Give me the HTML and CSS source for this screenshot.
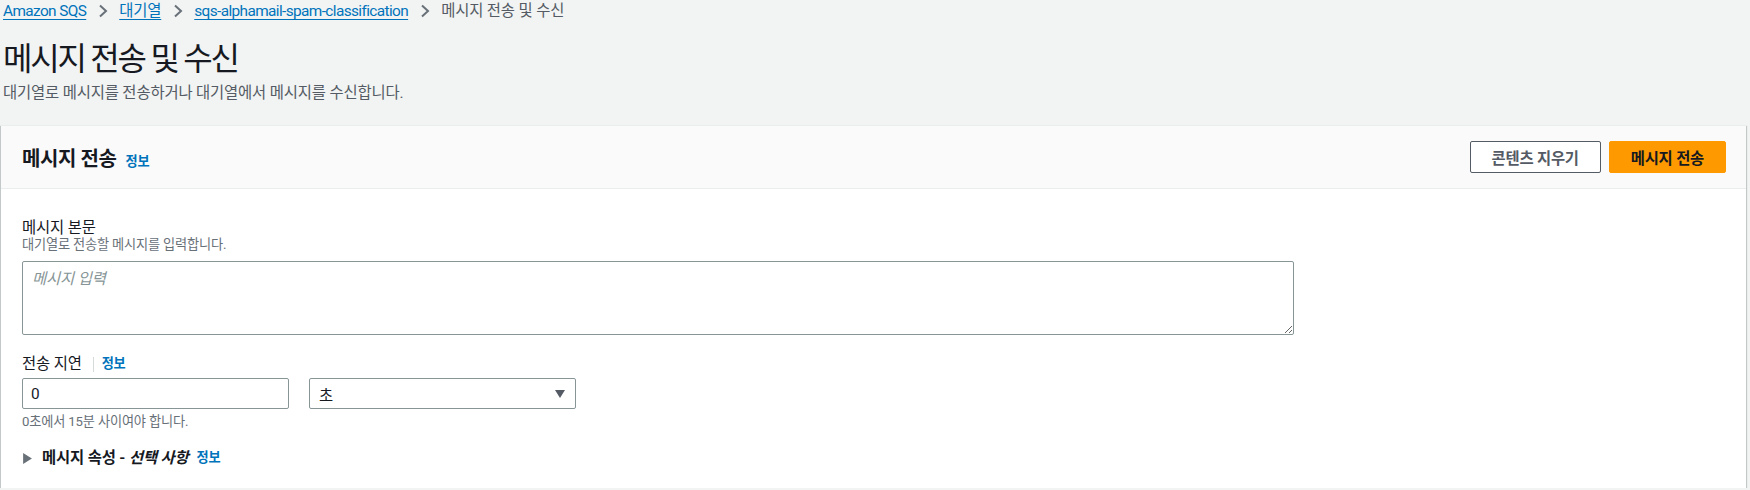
FILE: index.html
```html
<!DOCTYPE html>
<html lang="ko">
<head>
<meta charset="utf-8">
<title>메시지 전송 및 수신</title>
<link rel="stylesheet" href="styles.css">
</head>
<body>
<nav class="crumbs">
  <a class="en" href="#">Amazon SQS</a>
  <svg class="chev" viewBox="0 0 10 14" width="10" height="14"><path d="M2 1.5 L8 7 L2 12.5" /></svg>
  <a href="#">대기열</a>
  <svg class="chev" viewBox="0 0 10 14" width="10" height="14"><path d="M2 1.5 L8 7 L2 12.5" /></svg>
  <a class="en" href="#">sqs-alphamail-spam-classification</a>
  <svg class="chev" viewBox="0 0 10 14" width="10" height="14"><path d="M2 1.5 L8 7 L2 12.5" /></svg>
  <span class="cur">메시지 전송 및 수신</span>
</nav>
<header class="page-head">
  <h1>메시지 전송 및 수신</h1>
  <p class="sub">대기열로 메시지를 전송하거나 대기열에서 메시지를 수신합니다.</p>
</header>
<section class="card">
  <div class="card-head">
    <h2>메시지 전송<a class="info" href="#">정보</a></h2>
    <div class="actions">
      <button class="btn">콘텐츠 지우기</button>
      <button class="btn primary">메시지 전송</button>
    </div>
  </div>
  <div class="card-body">
    <div class="field">
      <label class="label">메시지 본문</label>
      <div class="desc">대기열로 전송할 메시지를 입력합니다.</div>
      <textarea class="textarea" placeholder="메시지 입력"></textarea>
    </div>
    <div class="field delay">
      <div class="label-row"><span>전송 지연</span><span class="sep"></span><a class="info" href="#">정보</a></div>
      <div class="row">
        <input class="input" type="text" value="0">
        <div class="select"><span>초</span><svg class="caret" viewBox="0 0 10 8" width="10" height="8"><path d="M0 0 H10 L5 8 Z"/></svg></div>
      </div>
      <div class="hint">0초에서 15분 사이여야 합니다.</div>
    </div>
    <div class="expand">
      <svg class="tri" viewBox="0 0 8 10" width="9" height="11"><path d="M0 0 L8 5 L0 10 Z"/></svg>
      <span class="exp-title">메시지 속성 - <i>선택 사항</i></span>
      <a class="info" href="#">정보</a>
    </div>
  </div>
</section>
</body>
</html>
```

FILE: styles.css
```css
html, body {
  margin: 0;
}
body {
  padding: 0 4px 0 1px;
  background: #f2f3f3;
  font-family: Roboto, "Noto Sans CJK KR", sans-serif;
  font-size: 15.4px;
  color: #16191f;
  letter-spacing: -0.01em;
}
a {
  color: #0073bb;
  text-decoration: none;
}
.en {
  letter-spacing: -0.04em;
}

/* breadcrumbs */
.crumbs {
  display: flex;
  align-items: center;
  height: 22px;
  line-height: 22px;
  padding-left: 2px;
}
.crumbs a {
  text-decoration: underline;
  text-underline-offset: 3px;
}
.crumbs .cur {
  color: #545b64;
}
.chev {
  margin: 0 11px 0 12px;
  fill: none;
  stroke: #687078;
  stroke-width: 2;
}

/* page header */
.page-head h1 {
  margin: 17px 0 0 2px;
  font-size: 32px;
  line-height: 40px;
  font-weight: 400;
  letter-spacing: -0.07em;
}
.page-head .sub {
  margin: 3px 0 0 2px;
  line-height: 22px;
  color: #545b64;
}

/* card */
.card {
  margin-top: 21px;
  background: #fff;
  border-top: 1px solid #eaeded;
  box-shadow: 0 1px 1px 0 rgba(0, 28, 36, .3), 1px 1px 1px 0 rgba(0, 28, 36, .15), -1px 1px 1px 0 rgba(0, 28, 36, .15);
}
.card-head {
  height: 62px;
  padding: 0 20px 0 21px;
  background: #fafafa;
  border-bottom: 1px solid #eaeded;
  display: flex;
  align-items: center;
  justify-content: space-between;
}
.card-head h2 {
  margin: 0;
  font-size: 20px;
  font-weight: 700;
  letter-spacing: -0.02em;
  display: flex;
  align-items: baseline;
}
.info {
  font-size: 13.2px;
  font-weight: 700;
  letter-spacing: -0.02em;
}
.card-head .info {
  margin-left: 9px;
}
.actions {
  display: flex;
  gap: 8px;
}
.btn {
  height: 32px;
  padding: 0 21px;
  border: 1px solid #545b64;
  border-radius: 2px;
  background: #fff;
  color: #545b64;
  font-family: inherit;
  font-size: 15.4px;
  font-weight: 700;
  letter-spacing: -0.015em;
}
.btn.primary {
  background: #ff9900;
  border-color: #ff9900;
  color: #16191f;
}

.card-body {
  padding: 29px 20px 19px 21px;
}
.label {
  display: block;
  line-height: 20px;
}
.desc, .hint {
  font-size: 13.2px;
  line-height: 16px;
  color: #687078;
}
.desc {
  margin-top: -1px;
}
.textarea {
  display: block;
  margin-top: 8px;
  width: 1272px;
  height: 74px;
  box-sizing: border-box;
  border: 1px solid #879596;
  border-radius: 2px;
  padding: 4px 9px;
  font-family: inherit;
  font-size: 15.4px;
  letter-spacing: -0.01em;
  color: #16191f;
}
.textarea::placeholder {
  color: #879596;
  font-style: italic;
}
.delay {
  margin-top: 18px;
}
.label-row {
  display: flex;
  align-items: center;
  line-height: 22px;
}
.sep {
  width: 1px;
  height: 15px;
  background: #d5dbdb;
  margin: 0 8px 0 11px;
}
.row {
  margin-top: 3px;
  display: flex;
  gap: 20px;
}
.input, .select {
  width: 267px;
  height: 31px;
  box-sizing: border-box;
  border: 1px solid #879596;
  border-radius: 2px;
  background: #fff;
  font-family: inherit;
  font-size: 15.4px;
  color: #16191f;
}
.input {
  padding: 0 8px;
  letter-spacing: 0;
}
.select {
  display: flex;
  align-items: center;
  justify-content: space-between;
  padding: 0 10px 0 9px;
}
.caret {
  fill: #545b64;
}
.hint {
  margin-top: 5px;
}
.expand {
  margin-top: 17px;
  display: flex;
  align-items: center;
  line-height: 22px;
}
.tri {
  margin: 0 10px 0 1px;
  fill: #687078;
}
.exp-title {
  font-weight: 700;
  color: #16191f;
}
.expand .info {
  margin-left: 8px;
}
```
